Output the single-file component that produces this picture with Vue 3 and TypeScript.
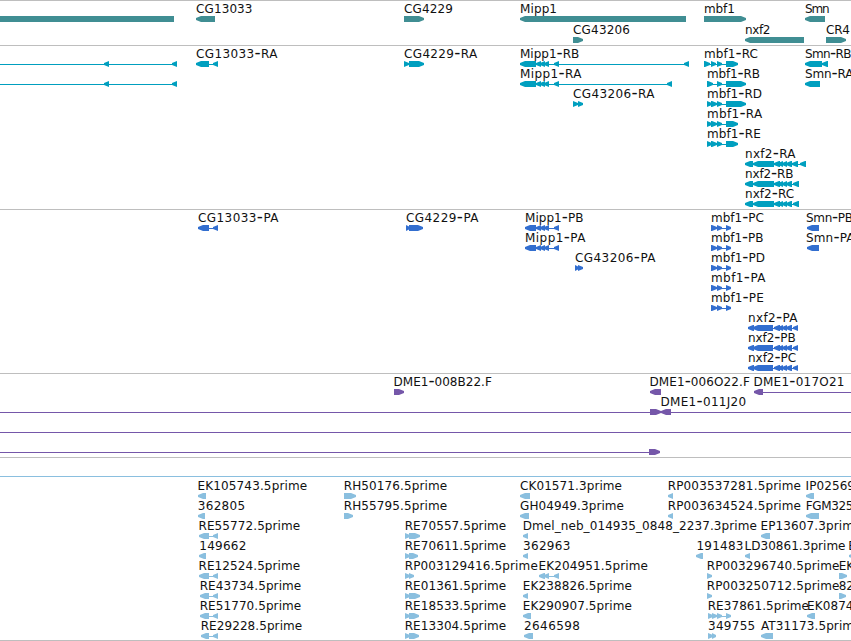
<script setup lang="ts">
type Direction = 'L' | 'R' | 'B'

interface Feature {
  row: number
  parts: string[]
  x: number
  width?: number
  line?: [number, number]
  blocks: { dir: Direction; from: number; to: number }[]
}

interface Track {
  name: string
  height: number
  pitch: number
  features: Feature[]
}

/* Blocks are written as "L196-215 R404-424": direction, start, end. */
function feature(
  row: number,
  label: string,
  x: number,
  end: number,
  blocks: string,
  line?: [number, number],
): Feature {
  return {
    row,
    parts: label.split(/(-)/).filter(Boolean),
    x,
    width: end > x ? end - x + 0.5 : undefined,
    line,
    blocks: blocks
      .split(' ')
      .filter(Boolean)
      .map((b) => {
        const [from, to] = b.slice(1).split('-').map(Number)
        return { dir: b[0] as Direction, from, to }
      }),
  }
}

function shape(b: { dir: Direction; from: number; to: number }, top: number): string {
  const { from, to, dir } = b
  const head = Math.min(5, to - from)
  const bottom = top + 6
  if (dir === 'L') {
    return `${from},${top + 2} ${from + head},${top} ${to},${top} ${to},${bottom} ${from + head},${bottom} ${from},${top + 4}`
  }
  if (dir === 'R') {
    return `${from},${top} ${to - head},${top} ${to},${top + 2} ${to},${top + 4} ${to - head},${bottom} ${from},${bottom}`
  }
  return `${from},${top} ${to},${top} ${to},${bottom} ${from},${bottom}`
}

const f = feature
const nxfCluster = 'L774-780 L778-783 L782-787 L786-792'

const tracks: Track[] = [
  {
    name: 'genes',
    height: 45,
    pitch: 21,
    features: [
      f(0, '', 0, 0, 'B0-174'),
      f(0, 'CG13033', 196, 252, 'L196-215'),
      f(0, 'CG4229', 404, 452.5, 'R404-424'),
      f(0, 'Mipp1', 520, 556.5, 'L520-686'),
      f(1, 'CG43206', 573, 629.5, 'R573-583'),
      f(0, 'mbf1', 704, 734.3, 'R704-746'),
      f(1, 'nxf2', 745, 770, 'L745-804'),
      f(0, 'Smn', 805, 829, 'L805-825'),
      f(1, 'CR4', 826, 849.5, 'R826-846'),
    ],
  },
  {
    name: 'transcripts',
    height: 164,
    pitch: 20,
    features: [
      f(0, '', 0, 0, 'L104-109 L172-177', [0, 177]),
      f(1, '', 0, 0, 'L104-109 L172-177', [0, 177]),
      f(0, 'CG13033-RA', 196, 277, 'L196-209 L213-218', [196, 218]),
      f(0, 'CG4229-RA', 404, 476.7, 'R404-409 R409-424', [404, 420]),
      f(0, 'Mipp1-RB', 520, 578.8, 'L520-536 L536-541 L540-545 L544-549 L554-559 L684-689', [522, 689]),
      f(1, 'Mipp1-RA', 520, 581, 'L520-536 L536-541 L540-545 L544-549 L554-559 L667-672', [522, 672]),
      f(2, 'CG43206-RA', 573, 654, 'R573-578 R578-583'),
      f(0, 'mbf1-RC', 704, 757.5, 'R704-710 R711-716 R717-722 R726-738', [704, 730]),
      f(1, 'mbf1-RB', 707, 759.5, 'R707-713 R717-722 R726-746', [707, 730]),
      f(2, 'mbf1-RD', 707, 761.5, 'R707-712 R711-717 R717-722 R726-746', [707, 730]),
      f(3, 'mbf1-RA', 707, 761.7, 'R707-712 R711-717 R717-722 R726-738', [707, 730]),
      f(4, 'mbf1-RE', 707, 760.3, 'R707-712 R711-717 R717-722 R726-738', [707, 730]),
      f(5, 'nxf2-RA', 745, 795, `L745-753 L753-774 ${nxfCluster} L792-798 L800-806`, [747, 806]),
      f(6, 'nxf2-RB', 745, 793, `L745-753 L753-774 ${nxfCluster} L793-799`, [747, 799]),
      f(7, 'nxf2-RC', 745, 793.7, `L745-753 L753-774 ${nxfCluster} L793-799`, [747, 799]),
      f(0, 'Smn-RB', 805, 851, 'L805-822 L822-828'),
      f(1, 'Smn-RA', 805, 853, 'L805-820'),
    ],
  },
  {
    name: 'proteins',
    height: 164,
    pitch: 20,
    features: [
      f(0, 'CG13033-PA', 198, 278, 'L198-209 L213-218', [200, 218]),
      f(0, 'CG4229-PA', 406, 478, 'R406-410 R409-423'),
      f(0, 'Mipp1-PB', 525, 583, 'L525-536 L536-541 L540-545 L544-549 L554-559', [527, 559]),
      f(1, 'Mipp1-PA', 525, 585, 'L525-536 L536-541 L540-545 L544-549 L554-559', [527, 559]),
      f(2, 'CG43206-PA', 575, 655, 'R575-579 R578-583'),
      f(0, 'mbf1-PC', 711, 763.5, 'R711-717 R717-722 R726-731', [711, 731]),
      f(1, 'mbf1-PB', 711, 763, 'R711-717 R717-722 R726-731', [711, 731]),
      f(2, 'mbf1-PD', 711, 764.5, 'R711-717 R717-722 R726-731', [711, 731]),
      f(3, 'mbf1-PA', 711, 765, 'R711-717 R717-722 R726-731', [711, 731]),
      f(4, 'mbf1-PE', 711, 763.3, 'R711-717 R717-722 R726-731', [711, 731]),
      f(5, 'nxf2-PA', 748, 797, `L748-754 L753-773 ${nxfCluster} L793-798`, [750, 798]),
      f(6, 'nxf2-PB', 748, 795.2, `L748-754 L753-773 ${nxfCluster} L793-798`, [750, 798]),
      f(7, 'nxf2-PC', 748, 795.7, `L748-754 L753-773 ${nxfCluster} L793-798`, [750, 798]),
      f(0, 'Smn-PB', 806, 852.5, 'L807-819'),
      f(1, 'Smn-PA', 806, 854, 'L807-819'),
    ],
  },
  {
    name: 'clones',
    height: 84,
    pitch: 20,
    features: [
      f(0, 'DME1-008B22.F', 393.5, 491.3, 'R394-404'),
      f(0, 'DME1-006O22.F', 649.5, 749.3, 'L650-661'),
      f(0, 'DME1-017O21', 753.5, 844, 'L754-763', [756, 851]),
      f(1, '', 0, 0, 'R650-661', [0, 656]),
      f(1, 'DME1-011J20', 660.5, 745.7, 'L661-671', [664, 851]),
      f(2, '', 0, 0, '', [0, 851]),
      f(3, '', 0, 0, 'R649-660', [0, 656]),
    ],
  },
  { name: 'spacer', height: 19, pitch: 20, features: [] },
  {
    name: 'ests',
    height: 164,
    pitch: 20,
    features: [
      f(0, 'EK105743.5prime', 197.5, 306.7, 'L198-206'),
      f(1, '362805', 197.7, 244.7, 'L198-205'),
      f(2, 'RE55772.5prime', 198.5, 299.7, 'L199-209 L213-218', [202, 218]),
      f(3, '149662', 199.3, 245.9, 'L199-206'),
      f(4, 'RE12524.5prime', 198.5, 299.7, 'L199-209 L213-218', [202, 218]),
      f(5, 'RE43734.5prime', 199.7, 300.7, 'L200-209 L213-218', [202, 218]),
      f(6, 'RE51770.5prime', 199.7, 300.7, 'L200-209 L213-218', [202, 218]),
      f(7, 'RE29228.5prime', 200.7, 301.7, 'L201-209 L213-218', [203, 218]),
      f(0, 'RH50176.5prime', 343.7, 446.7, 'R344-356'),
      f(1, 'RH55795.5prime', 343.7, 446.7, 'R344-353'),
      f(2, 'RE70557.5prime', 404.7, 505.7, 'R405-410 R409-420'),
      f(3, 'RE70611.5prime', 404.7, 505.7, 'R405-410 R409-418'),
      f(4, 'RP003129416.5prime', 404.7, 537.3, 'R405-410 R409-414'),
      f(5, 'RE01361.5prime', 404.7, 505.7, 'R405-410 R409-420'),
      f(6, 'RE18533.5prime', 404.7, 505.7, 'R405-410 R409-419'),
      f(7, 'RE13304.5prime', 404.7, 505.7, 'R405-410 R409-419'),
      f(0, 'CK01571.3prime', 520, 621.5, 'L520-530'),
      f(1, 'GH04949.3prime', 520, 623.5, 'L520-529'),
      f(2, 'Dmel_neb_014935_0848_2237.3prime', 522.7, 756.3, 'L523-528'),
      f(3, '362963', 523, 569.9, 'L523-528'),
      f(4, 'EK204951.5prime', 538.5, 647.5, 'L539-545 L544-549 L554-559', [541, 559]),
      f(5, 'EK238826.5prime', 522.7, 631.5, 'L523-528'),
      f(6, 'EK290907.5prime', 522.7, 631.5, 'L523-531'),
      f(7, '2646598', 524, 579.5, 'L524-533'),
      f(0, 'RP003537281.5prime', 667.7, 800.5, 'L668-673'),
      f(1, 'RP003634524.5prime', 667.7, 800.5, 'L668-673'),
      f(0, 'IP02569', 805.5, 854.5, 'L806-814'),
      f(1, 'FGM325', 805.7, 853, 'L806-819'),
      f(2, 'EP13607.3prime', 760.5, 861, 'L761-770'),
      f(3, '191483', 696.5, 743, 'L696-703'),
      f(3, 'LD30861.3prime', 744.5, 845, 'L745-750'),
      f(3, 'E', 848.3, 0, 'L849-855'),
      f(4, 'RP003296740.5prime', 706.7, 838.9, 'R707-712'),
      f(5, 'RP003250712.5prime', 706.7, 838.9, 'R707-712'),
      f(6, 'RE37861.5prime', 707.7, 808.5, 'R708-713 R712-717 R717-722 R726-731', [708, 731]),
      f(7, '349755', 708, 754.7, 'R708-713 R712-716'),
      f(4, 'EK', 838.7, 0, 'R839-847'),
      f(5, '82', 838.7, 0, 'R839-846'),
      f(6, 'EK0874', 807, 853, 'L807-815'),
      f(7, 'AT31173.5prime', 761, 861, 'L761-773'),
    ],
  },
]
</script>

<template>
  <main class="browser">
    <section
      v-for="t in tracks"
      :key="t.name"
      class="track"
      :class="t.name"
    >
      <svg width="851" :height="t.height" :viewBox="`0 0 851 ${t.height}`">
        <g v-for="(item, i) in t.features" :key="i">
          <rect
            v-if="item.line"
            :x="item.line[0]"
            :y="item.row * t.pitch + 19"
            :width="item.line[1] - item.line[0]"
            height="1"
          />
          <polygon
            v-for="(b, j) in item.blocks"
            :key="j"
            :points="shape(b, item.row * t.pitch + 16)"
          />
          <text
            v-if="item.parts.length"
            :x="item.x"
            :y="item.row * t.pitch + 13"
            :textLength="item.width"
          ><tspan
            v-for="(part, k) in item.parts"
            :key="k"
            :class="{ dash: part === '-' }"
          >{{ part }}</tspan></text>
        </g>
      </svg>
    </section>
  </main>
</template>

<style>
body {
  margin: 0;
  background: #fff;
  overflow: hidden;
}
</style>

<style scoped>
.browser {
  display: flex;
  flex-direction: column;
  width: 851px;
  height: 641px;
  overflow: hidden;
  background: #fff;
}
.track {
  flex: none;
  line-height: 0;
  background: linear-gradient(#bebebe, #bebebe) top / 100% 1px no-repeat;
}
.track svg {
  display: block;
}
.genes {
  fill: #408e93;
}
.transcripts {
  fill: #009fbf;
}
.proteins {
  fill: #326ecf;
}
.clones {
  fill: #7557a9;
}
.ests {
  fill: #8abfdf;
  border-top: 1px solid #8abfdf;
  background: linear-gradient(#bebebe, #bebebe) bottom / 100% 1px no-repeat;
}
text {
  font-family: 'DejaVu Sans', Verdana, sans-serif;
  font-size: 12px;
  fill: #111;
}
.dash {
  font-size: 17px;
}
</style>
